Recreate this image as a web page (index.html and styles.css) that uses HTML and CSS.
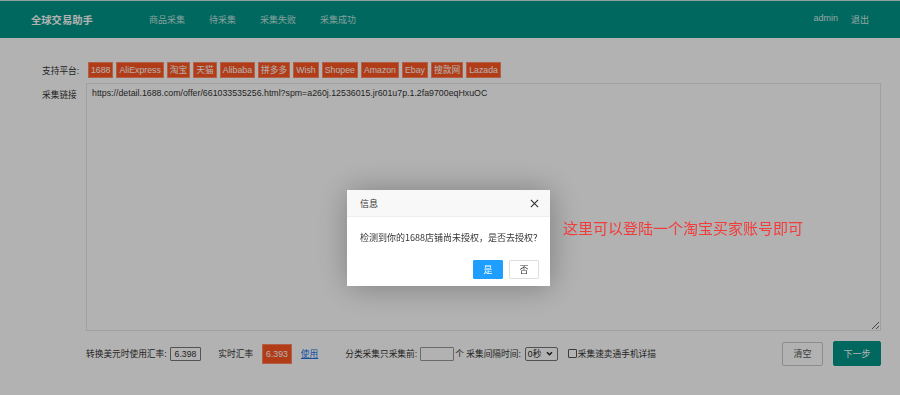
FILE: index.html
```html
<!DOCTYPE html>
<html>
  <head>
    <title>全球交易助手</title>
    <link rel="stylesheet" href="styles.css">
  </head>
  <body>
    <div class="header">
      <div class="logo">全球交易助手</div>
      <ul class="nav">
        <li>商品采集</li>
        <li>待采集</li>
        <li>采集失败</li>
        <li>采集成功</li>
      </ul>
      <ul class="nav nav-right">
        <li>admin</li>
        <li>退出</li>
      </ul>
    </div>

    <div class="main">
      <div class="row">
        <label class="row-label">支持平台:</label>
        <div class="tags">
          <span class="tag">1688</span>
          <span class="tag">AliExpress</span>
          <span class="tag">淘宝</span>
          <span class="tag">天猫</span>
          <span class="tag">Alibaba</span>
          <span class="tag">拼多多</span>
          <span class="tag">Wish</span>
          <span class="tag">Shopee</span>
          <span class="tag">Amazon</span>
          <span class="tag">Ebay</span>
          <span class="tag">搜款网</span>
          <span class="tag">Lazada</span>
        </div>
      </div>
      <div class="row row-link">
        <label class="row-label">采集链接</label>
        <textarea class="link-box">https://detail.1688.com/offer/661033535256.html?spm=a260j.12536015.jr601u7p.1.2fa9700eqHxuOC</textarea>
      </div>
      <div class="toolbar">
        <span class="text">转换美元时使用汇率:</span>
        <span class="box">6.398</span>
        <span class="text gap">实时汇率</span>
        <span class="rate">6.393</span>
        <a class="use" href="#">使用</a>
        <span class="text gap-lg">分类采集只采集前:</span>
        <span class="box box-empty"></span>
        <span class="text">个 采集间隔时间:</span>
        <span class="select">0秒<svg width="7" height="5" viewBox="0 0 8 6"><path d="M1 1.5 L4 4.5 L7 1.5" fill="none" stroke="#222" stroke-width="1.8"/></svg></span>
        <span class="check"><span class="checkbox"></span>采集速卖通手机详描</span>
        <span class="spacer"></span>
        <button class="btn btn-plain">清空</button>
        <button class="btn btn-green">下一步</button>
      </div>
    </div>

    <div class="shade"></div>

    <div class="dialog">
      <div class="dialog-title">
        <span>信息</span>
        <svg class="close" width="9" height="9" viewBox="0 0 10 10"><path d="M1 1 L9 9 M9 1 L1 9" stroke="#333" stroke-width="1.3"/></svg>
      </div>
      <div class="dialog-body">检测到你的1688店铺尚未授权，是否去授权？</div>
      <div class="dialog-btns">
        <button class="dbtn dbtn-primary">是</button>
        <button class="dbtn">否</button>
      </div>
    </div>

    <div class="note">这里可以登陆一个淘宝买家账号即可</div>
  </body>
</html>
```

FILE: styles.css
```css
body {
  margin: 0;
  font-family: "Liberation Sans", "Noto Sans CJK SC", sans-serif;
  font-size: 9px;
  color: #333;
  background: #fff;
}

/* Top bar */
.header {
  display: flex;
  align-items: center;
  height: 37px;
  border-top: 1px solid #cde6e2;
  background-color: #009688;
  padding: 0 31px;
}
.logo {
  color: #fff;
  font-size: 10.3px;
  font-weight: bold;
  width: 118px;
}
.nav {
  display: flex;
  gap: 24px;
  list-style: none;
  margin: 0;
  padding: 0;
  color: rgba(255, 255, 255, 0.75);
}
.nav-right {
  margin-left: auto;
  gap: 13px;
  color: rgba(255, 255, 255, 0.85);
}

/* Form */
.main {
  padding: 24px 19px 0 42px;
  font-size: 8.7px;
}
.row {
  display: flex;
  align-items: center;
}
.row-label {
  width: 46px;
  flex: none;
  color: #333;
}
.tags {
  display: flex;
  gap: 3px;
}
.tag {
  display: inline-block;
  height: 14px;
  line-height: 14px;
  padding: 0 2px;
  font-size: 8.75px;
  background-color: #ff5722;
  color: #fff;
  border: 1px solid #ff8a65;
}
.row-link {
  align-items: flex-start;
  margin-top: 5px;
}
.row-link .row-label {
  width: 44px;
  padding-top: 5px;
}
.link-box {
  flex: 1;
  height: 248px;
  box-sizing: border-box;
  border: 1px solid #e6e6e6;
  padding: 4px 5px;
  font-family: "Liberation Sans", "Noto Sans CJK SC", sans-serif;
  font-size: 8.8px;
  color: #333;
  resize: vertical;
  outline: none;
}

/* Bottom toolbar */
.toolbar {
  display: flex;
  align-items: center;
  margin-top: 10px;
  padding-left: 44px;
  height: 25px;
}
.gap { margin-left: 17px; }
.gap-lg { margin-left: 27px; }
.box {
  display: inline-block;
  height: 12px;
  line-height: 12px;
  padding: 0 4px;
  margin-left: 3px;
  border: 1px solid #777;
  border-radius: 1px;
  background: #fff;
}
.box-empty {
  width: 24px;
  border-color: #999;
  margin-right: 1px;
}
.rate {
  margin-left: 9px;
  height: 18px;
  line-height: 18px;
  padding: 0 3px;
  background: #ff5722;
  color: #fff;
  border: 1px solid #ff8a65;
}
.use {
  margin-left: 9px;
  color: #1a73e8;
}
.select {
  display: inline-flex;
  align-items: center;
  justify-content: space-between;
  width: 25px;
  margin-left: 4px;
  height: 12px;
  padding: 0 4px 0 2px;
  border: 1px solid #767676;
  border-radius: 2px;
  background: #fff;
  color: #222;
}
.check {
  display: inline-flex;
  align-items: center;
  margin-left: 10px;
}
.checkbox {
  width: 7px;
  height: 7px;
  border: 1px solid #555;
  border-radius: 1px;
  margin-right: 1px;
  background: #fff;
}
.spacer { flex: 1; }
.btn {
  font-family: "Noto Sans CJK SC", sans-serif;
  font-size: 9px;
  height: 25px;
  padding: 0;
  border-radius: 2px;
  cursor: pointer;
}
.btn-plain {
  background: #fff;
  border: 1px solid #c9c9c9;
  color: #555;
  width: 41px;
  height: 24px;
  margin-right: 10px;
}
.btn-green {
  background: #009688;
  border: 1px solid #009688;
  color: #fff;
  width: 48px;
}

/* Modal layer */
.shade {
  position: fixed;
  top: 0;
  left: 0;
  right: 0;
  bottom: 0;
  background: rgba(0, 0, 0, 0.3);
}
.dialog {
  position: fixed;
  left: 347px;
  top: 190px;
  width: 203px;
  height: 96px;
  background: #fff;
  box-shadow: 1px 1px 30px rgba(0, 0, 0, 0.3);
}
.dialog-title {
  display: flex;
  align-items: center;
  justify-content: space-between;
  height: 26px;
  padding: 0 11px 0 13px;
  background: #f8f8f8;
  border-bottom: 1px solid #eee;
  color: #333;
}
.dialog-body {
  padding: 14px 0 0 13px;
  height: 29px;
  color: #333;
  font-family: "Noto Sans CJK SC", sans-serif;
}
.dialog-btns {
  display: flex;
  justify-content: flex-end;
  gap: 6px;
  padding-right: 11px;
}
.dbtn {
  width: 30px;
  height: 19px;
  padding: 0;
  border: 1px solid #dedede;
  background: #fff;
  color: #333;
  font-size: 9px;
  border-radius: 1px;
  font-family: "Noto Sans CJK SC", sans-serif;
}
.dbtn-primary {
  background: #1e9fff;
  border-color: #1e9fff;
  color: #fff;
}

/* Red annotation */
.note {
  position: fixed;
  left: 563px;
  top: 217px;
  color: #f23c3c;
  font-size: 15px;
  font-family: "Noto Sans CJK SC", sans-serif;
}
```
